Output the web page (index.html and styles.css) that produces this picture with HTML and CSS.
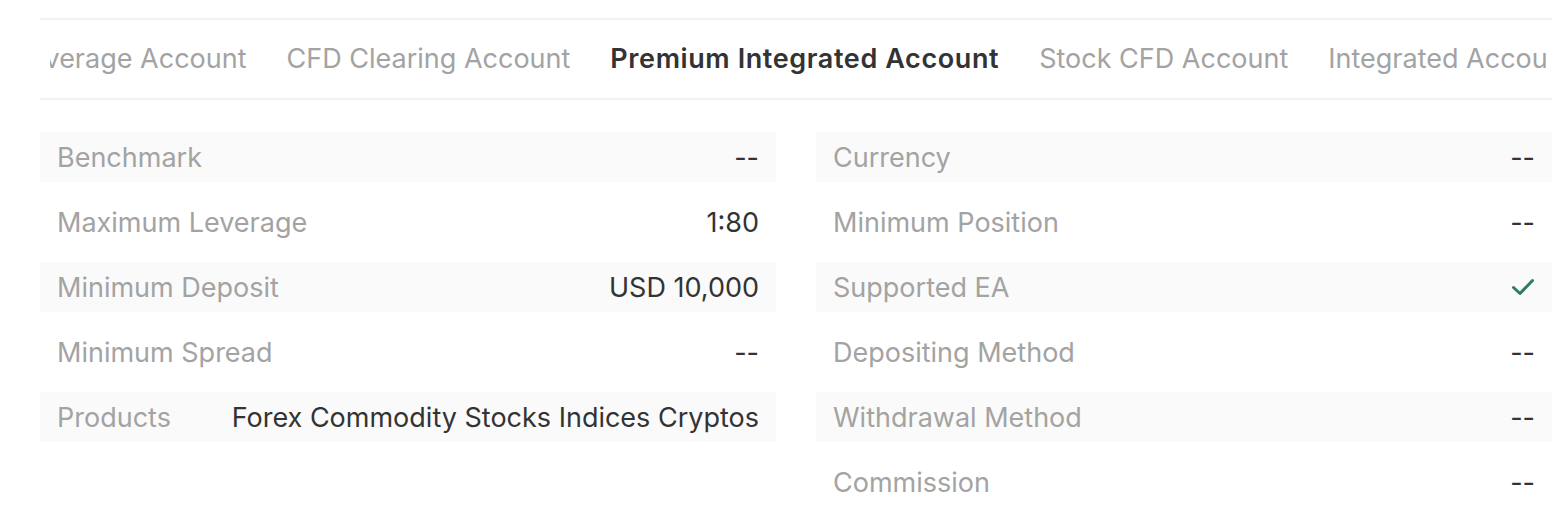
FILE: index.html
```html
<!DOCTYPE html>
<html lang="en">
<head>
<meta charset="UTF-8" />
<meta name="viewport" content="width=device-width, initial-scale=1.0" />
<title>Account Types</title>
<link rel="stylesheet" href="styles.css">
</head>
<body>

<div class="page">
<div class="tabs">
<div class="tabs-viewport">
<div class="tabs-track">
<div class="tab">Leverage Account</div>
<div class="tab">CFD Clearing Account</div>
<div class="tab active">Premium Integrated Account</div>
<div class="tab">Stock CFD Account</div>
<div class="tab">Integrated Account</div>
</div>
</div>
</div>

<div class="specs">
<div class="spec-col">
<div class="row"><span class="label">Benchmark</span><span class="value">--</span></div>
<div class="row"><span class="label">Maximum Leverage</span><span class="value">1:80</span></div>
<div class="row"><span class="label">Minimum Deposit</span><span class="value">USD 10,000</span></div>
<div class="row"><span class="label">Minimum Spread</span><span class="value">--</span></div>
<div class="row"><span class="label">Products</span><span class="value">Forex Commodity Stocks Indices Cryptos</span></div>
</div>
<div class="spec-col">
<div class="row"><span class="label">Currency</span><span class="value">--</span></div>
<div class="row"><span class="label">Minimum Position</span><span class="value">--</span></div>
<div class="row"><span class="label">Supported EA</span>
<span class="value check">
<svg width="24" height="18" viewBox="0 0 24 18"><path d="M2.5 9.5 L9 15.5 L21.5 2.5" fill="none" stroke="#2f7d5e" stroke-width="3" stroke-linecap="round" stroke-linejoin="round"/></svg>
</span></div>
<div class="row"><span class="label">Depositing Method</span><span class="value">--</span></div>
<div class="row"><span class="label">Withdrawal Method</span><span class="value">--</span></div>
<div class="row"><span class="label">Commission</span><span class="value">--</span></div>
</div>
</div>
</div>

</body>
</html>
```

FILE: styles.css
```css
* { box-sizing: border-box; }

html, body {
margin: 0; padding: 0;
font-family: Inter, "Noto Sans", Roboto, Arial, sans-serif;
background: #ffffff;
}

.page {
padding: 18px 14px 0 40px;
}

.tabs {
border-top: 2px solid #f2f2f2;
border-bottom: 2px solid #f2f2f2;
}

.tabs-viewport {
overflow: hidden;
margin: 0 4px 0 10px;
}

.tabs-track {
display: flex;
gap: 40px;
margin-left: -36px; /* strip is scrolled to the active tab */
white-space: nowrap;
}

.tab {
height: 80px;
line-height: 78px;
font-size: 27px;
color: #a3a3a3;
margin-bottom: -2px;
border-bottom: 2px solid transparent;
}

.tab.active {
color: #333333;
font-weight: 600;
letter-spacing: 0.6px;
border-bottom-color: #444444;
}

.specs {
display: grid;
grid-template-columns: 736px 736px;
gap: 40px;
padding-top: 32px;
}

.spec-col {
display: flex;
flex-direction: column;
gap: 15px;
}

.row {
display: flex;
justify-content: space-between;
align-items: center;
height: 50px;
padding: 0 17px;
font-size: 27px;
}

.row:nth-child(odd) {
background: #fafafa;
}

.label { color: #a3a3a3; }
.value { color: #333333; }

.check {
display: flex;
align-items: center;
margin-right: 0;
}
```
